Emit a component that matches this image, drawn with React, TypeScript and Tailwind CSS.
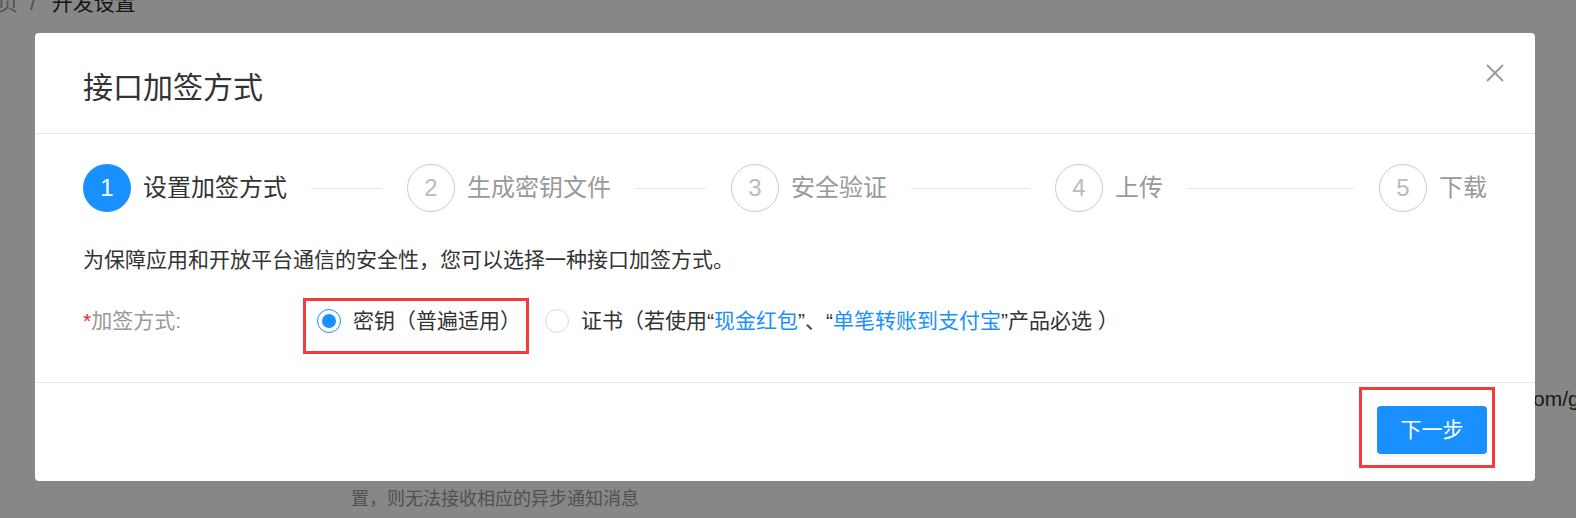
import { ReactElement } from "react";

const STEPS = [
  { n: 1, title: "设置加签方式" },
  { n: 2, title: "生成密钥文件" },
  { n: 3, title: "安全验证" },
  { n: 4, title: "上传" },
  { n: 5, title: "下载" },
];

const StepItem = ({ n, title, last }: { n: number; title: string; last: boolean }): ReactElement => {
  const active = n === 1;
  return (
    <div className={last ? "flex shrink-0 items-center" : "flex flex-1 items-center"}>
      <div
        className={
          active
            ? "flex h-[48px] w-[48px] shrink-0 items-center justify-center rounded-full bg-[#1890ff] text-[24px] text-white"
            : "flex h-[48px] w-[48px] shrink-0 items-center justify-center rounded-full border border-[#cccccc] text-[24px] text-[#bbbbbb]"
        }
      >
        {n}
      </div>
      <div
        className={
          active
            ? "ml-[12px] whitespace-nowrap text-[24px] leading-[36px] text-[#333333]"
            : "ml-[12px] whitespace-nowrap text-[24px] leading-[36px] text-[#999999]"
        }
      >
        {title}
      </div>
      {!last && <div className="ml-[24px] mr-[25px] h-px flex-1 bg-[#e8e8e8]" />}
    </div>
  );
};

const App = (): ReactElement => {
  return (
    <div className="relative h-[518px] w-full overflow-hidden bg-white font-['Liberation_Sans','Noto_Sans_CJK_SC',sans-serif] text-[#333333]">
      {/* page behind the dialog */}
      <div className="-ml-[24px] -mt-[13px] flex items-center whitespace-nowrap text-[21px] leading-[31.5px]">
        <span className="text-[#999999]">首页</span>
        <span className="ml-[12px] mr-[16px] text-[#999999]">/</span>
        <span className="text-[#2b2b2b]">开发设置</span>
      </div>
      <div className="mt-[364px] flex whitespace-nowrap text-[21px] leading-[31.5px] text-[#333333]">
        <span className="w-[1533px] shrink-0 overflow-hidden text-right">应用网关：https://openapi.alipay.c</span>
        <span>om/gateway.do</span>
      </div>
      <div className="mt-[72px] whitespace-nowrap pl-[351px] text-[18px] leading-[27px] text-[#999999]">
        置，则无法接收相应的异步通知消息
      </div>

      <div className="absolute inset-0 bg-[rgba(0,0,0,0.47)]" />

      {/* dialog */}
      <div className="absolute left-[35px] top-[33px] w-[1500px] rounded-[4px] bg-white">
        <div className="relative h-[101px] border-b border-[#e8e8e8] pl-[48px] pt-[32px]">
          <div className="text-[30px] leading-[45px] text-[#333333]">接口加签方式</div>
          <button className="absolute right-[31px] top-[31px] h-[18px] w-[18px]">
            <svg viewBox="0 0 18 18" width="18" height="18" fill="none" stroke="#999999" strokeWidth="1.8">
              <path d="M1 1L17 17M17 1L1 17" />
            </svg>
          </button>
        </div>

        <div className="pb-[37px] pl-[48px] pr-[48px] pt-[30px]">
          <div className="flex h-[48px] items-center">
            {STEPS.map((s, i) => (
              <StepItem key={s.n} n={s.n} title={s.title} last={i === STEPS.length - 1} />
            ))}
          </div>

          <div className="mt-[32px] text-[21px] leading-[31.5px] text-[#333333]">
            为保障应用和开放平台通信的安全性，您可以选择一种接口加签方式。
          </div>

          <div className="mt-[21px] flex h-[48px] items-center text-[21px] leading-[31.5px]">
            <div className="w-[234px] shrink-0 text-[#999999]">
              <span className="text-[#f5222d]">*</span>加签方式:
            </div>
            <label className="relative mr-[12px] flex items-center">
              <span className="flex h-[24px] w-[24px] items-center justify-center rounded-full border border-[#1890ff]">
                <span className="h-[14px] w-[14px] rounded-full bg-[#1890ff]" />
              </span>
              <span className="whitespace-nowrap px-[12px] text-[#333333]">密钥（普遍适用）</span>
              <span className="pointer-events-none absolute -bottom-[18px] -left-[14px] -top-[7px] right-[4px] border-[3px] border-[#f33b3b]" />
            </label>
            <label className="flex items-center">
              <span className="h-[24px] w-[24px] rounded-full border border-[#d9d9d9] bg-white" />
              <span className="whitespace-nowrap pl-[12px] text-[#333333]">
                证书（若使用“<span className="text-[#1890ff]">现金红包</span>”、“
                <span className="text-[#1890ff]">单笔转账到支付宝</span>”产品必选 ）
              </span>
            </label>
          </div>
        </div>

        <div className="flex justify-end border-t border-[#e8e8e8] pb-[27px] pr-[48px] pt-[23px]">
          <button className="relative h-[48px] w-[110px] rounded-[4px] bg-[#1890ff] text-[21px] text-white shadow-[0_3px_0_rgba(0,0,0,0.04)]">
            下一步
            <span className="pointer-events-none absolute -bottom-[14px] -left-[18px] -right-[8px] -top-[19px] border-[3px] border-[#f33b3b]" />
          </button>
        </div>
      </div>
    </div>
  );
};

export default App;
